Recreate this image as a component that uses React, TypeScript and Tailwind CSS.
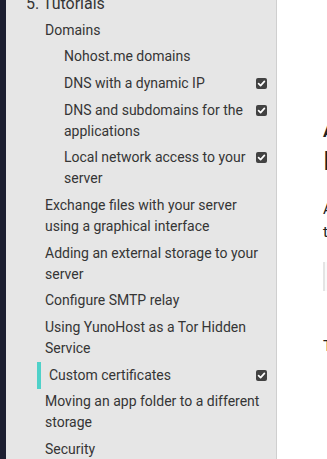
import React from "react"

type Item = {
  label: string
  level: 0 | 1 | 2
  done?: boolean
  active?: boolean
}

const items: Item[] = [
  { label: "5. Tutorials", level: 0 },
  { label: "Domains", level: 1 },
  { label: "Nohost.me domains", level: 2 },
  { label: "DNS with a dynamic IP", level: 2, done: true },
  { label: "DNS and subdomains for the applications", level: 2, done: true },
  { label: "Local network access to your server", level: 2, done: true },
  { label: "Exchange files with your server using a graphical interface", level: 1 },
  { label: "Adding an external storage to your server", level: 1 },
  { label: "Configure SMTP relay", level: 1 },
  { label: "Using YunoHost as a Tor Hidden Service", level: 1 },
  { label: "Custom certificates", level: 1, done: true, active: true },
  { label: "Moving an app folder to a different storage", level: 1 },
  { label: "Security", level: 1 },
]

function Check() {
  return (
    <svg width="11" height="11" viewBox="0 0 11 11" className="mt-[5px] ml-[2px] mr-[1px] shrink-0">
      <rect x="0" y="0" width="11" height="11" rx="2" fill="#424242" />
      <path d="M2.6 5.7 L4.6 7.6 L8.4 3.4" stroke="#fff" strokeWidth="1.7" fill="none" strokeLinecap="round" strokeLinejoin="round" />
    </svg>
  )
}

function NavItem({ item }: { item: Item }) {
  let pad = "pl-[39px]"
  if (item.level === 0) pad = "pl-[20px] text-[16px]"
  if (item.level === 2) pad = "pl-[58px]"
  if (item.active) pad = "ml-[31px] pl-[8px] border-l-4 border-[#4fd1c9]"
  return (
    <div className={`flex items-start py-[2.85px] leading-[21px] ${pad}`}>
      <span className="flex-1">{item.label}</span>
      {item.done && <Check />}
    </div>
  )
}

export default function App() {
  return (
    <div className="flex w-[327px] h-[459px] overflow-hidden bg-white" style={{ fontFamily: "'Roboto', 'Liberation Sans', sans-serif" }}>
      <div className="w-[6px] shrink-0 bg-[#1c1e30]" />
      <nav className="w-[271px] shrink-0 bg-[#e6e6e6] border-r border-[#cfcfcf] pr-[8px] text-[14px] text-[#353535]">
        <div className="mt-[-10px]">
          {items.map(item => (
            <NavItem key={item.label} item={item} />
          ))}
        </div>
      </nav>
      <main className="pl-[46px] pt-[120px] text-[#222] whitespace-nowrap">
        <div className="text-[17px] font-bold leading-[22px]">About custom certificates</div>
        <h1 className="text-[26px] leading-[34px] mt-[2px]">Installation</h1>
        <p className="mt-[20px] text-[15px] leading-[23px]">
          A custom certificate can be
          <br />
          the best option
        </p>
        <div className="mt-[18px] h-[29px] w-[200px] border-l-2 border-[#e4e4e4] bg-[#fafafa]" />
        <p className="mt-[44px] text-[15px] leading-[23px]">The certificate</p>
      </main>
    </div>
  )
}
